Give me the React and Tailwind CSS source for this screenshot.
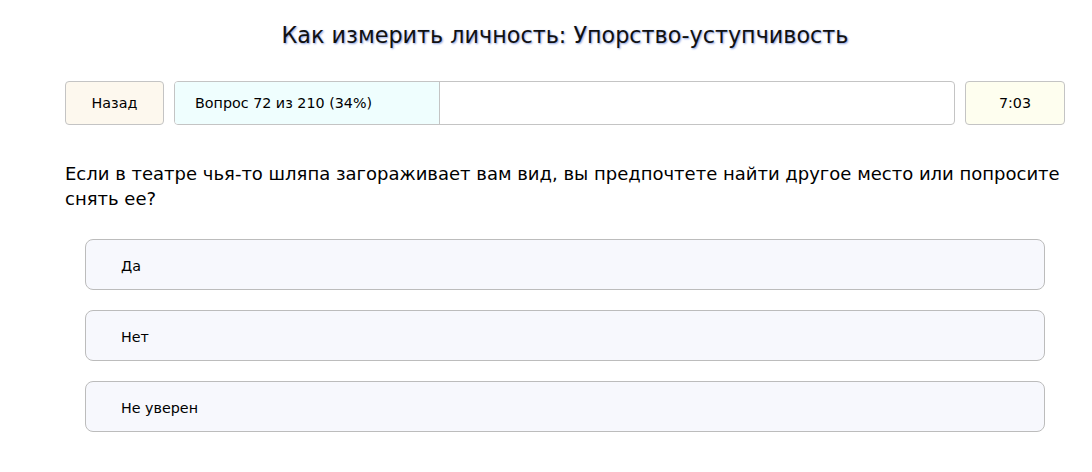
export default function App() {
  const font = { fontFamily: '"DejaVu Sans", sans-serif' };
  return (
    <div className="w-[1092px] h-[472px] bg-white text-black" style={font}>
      <div className="w-[1000px] ml-[65px] pt-[20px]">
        <h1 className="text-center text-[22.3px] leading-[30px] text-[#111] [text-shadow:1px_1px_2px_#8aa0e0]">
          Как измерить личность: Упорство-уступчивость
        </h1>
        <div className="flex mt-[31px] h-[44px] gap-[10px]">
          <div className="w-[99px] flex items-center justify-center pt-[2px] bg-[#fdf8ee] border border-[#c4c4c4] rounded-[4px] text-[14.3px]">
            Назад
          </div>
          <div className="flex-1 relative border border-[#c4c4c4] rounded-[4px] bg-white overflow-hidden">
            <div className="absolute left-0 top-0 bottom-0 w-[34%] bg-[#effefe] border-r border-[#c4c4c4]" />
            <div className="relative h-full flex items-center pt-[1px] pl-[20px] text-[14.3px]">Вопрос 72 из 210 (34%)</div>
          </div>
          <div className="w-[100px] flex items-center justify-center pt-[2px] bg-[#fefeef] border border-[#c4c4c4] rounded-[4px] text-[14.3px]">
            7:03
          </div>
        </div>
        <p className="mt-[36px] w-[1010px] text-[18px] leading-[25px]">
          Если в театре чья-то шляпа загораживает вам вид, вы предпочтете найти другое место или попросите снять ее?
        </p>
        <div className="mt-[28px] mx-[20px] flex flex-col gap-[20px]">
          {["Да", "Нет", "Не уверен"].map((t) => (
            <div key={t} className="h-[51px] flex items-center pt-[4px] pl-[35px] bg-[#f7f8fd] border border-[#bcbcbc] rounded-[8px] text-[14.3px]">
              {t}
            </div>
          ))}
        </div>
      </div>
    </div>
  );
}
